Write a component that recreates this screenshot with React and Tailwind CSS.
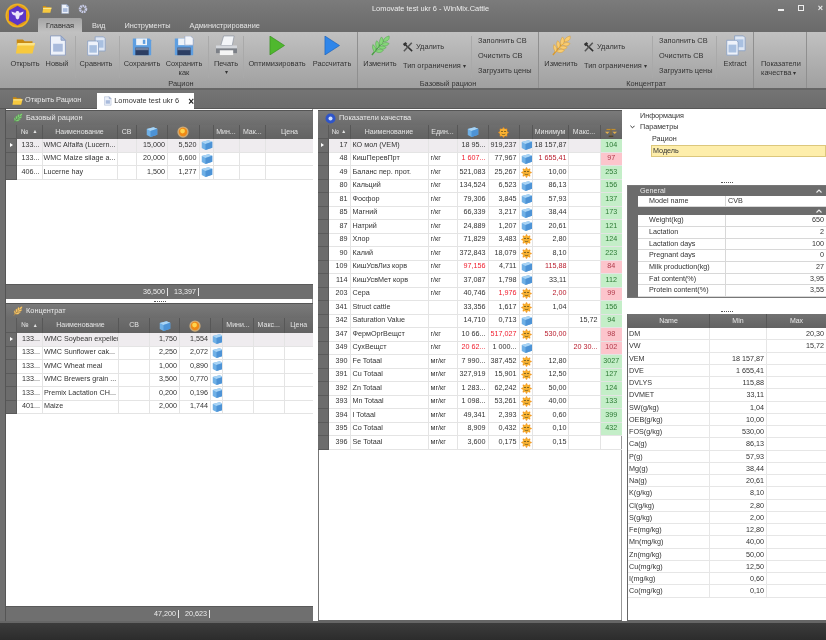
import React from 'react';

const Cube = ({ s = 12 }) => (
  <svg width={s} height={s} viewBox="0 0 16 16" className="shrink-0">
    <path d="M1 4 10 1.500l5 2.200v8L6 14.500l-5-2.500z" fill="#6fb0e6" />
    <path d="M1 4 10 1.500l5 2.200L6 6.500z" fill="#a9d4f5" />
    <path d="M6 6.500l9-2.800v8L6 14.500z" fill="#4d93d6" />
  </svg>
);
const Sun = ({ s = 12 }) => (
  <svg width={s} height={s} viewBox="0 0 16 16" className="shrink-0">
    <circle cx="8" cy="8" r="7.500" fill="#f7c77f" opacity=".7" />
    <circle cx="8" cy="8" r="5.600" fill="#f08a16" />
    <circle cx="7.400" cy="6.800" r="3.200" fill="#ffd34d" />
  </svg>
);
const Face = ({ s = 11 }) => (
  <svg width={s} height={s} viewBox="0 0 16 16" className="shrink-0">
    <g stroke="#ee8c1c" strokeWidth="2.200" strokeLinecap="round">
      <path d="M8 1.500v13M1.500 8h13M3.400 3.400l9.200 9.200M12.600 3.400l-9.200 9.200" />
    </g>
    <circle cx="8" cy="8" r="5.800" fill="#f9b233" />
    <path d="M4.300 6.500h3M8.800 6.500h3M5.400 10.300c1.500 1 3.700 1 5.200 0" stroke="#6f5a1e" strokeWidth="1.300" fill="none" />
  </svg>
);
const Scales = () => (
  <svg width="12" height="11" viewBox="0 0 16 14">
    <path d="M2 3h12" stroke="#c08d30" strokeWidth="1.600" />
    <path d="M8 2v9" stroke="#8a6a2a" strokeWidth="1.400" />
    <path d="M5 12h6" stroke="#4f3f20" strokeWidth="1.600" />
    <path d="M0 6h6l-3 3zM10 6h6l-3 3z" fill="#e2b04c" />
  </svg>
);
const Folder = ({ s = 21 }) => (
  <svg width={s} height={s} viewBox="0 0 24 24">
    <path d="M2 5h7l2 2h9v4H2z" fill="#c98a12" />
    <path d="M3 9h20l-3 12H1z" fill="#f7c93e" />
    <path d="M3 9h20l-1 3H2.400z" fill="#fce58a" />
  </svg>
);
const Doc = ({ s = 21 }) => (
  <svg width={s} height={s} viewBox="0 0 24 24">
    <path d="M4 1h12l5 5v17H4z" fill="#eef2fa" stroke="#8a9bc0" />
    <path d="M16 1v5h5z" fill="#a9bbdc" stroke="#8a9bc0" />
    <path d="M7 10h11v9H7z" fill="#a9bbdc" />
  </svg>
);
const Copy = ({ s = 20 }) => (
  <svg width={s} height={s} viewBox="0 0 24 24">
    <path d="M11 1h10l2 2v15H11z" fill="#dfe7f4" stroke="#8aa0c4" />
    <path d="M13 5h8v9h-8z" fill="#a9c0e0" />
    <path d="M2 6h11l2 2v15H2z" fill="#eef2fa" stroke="#8aa0c4" />
    <path d="M4 11h9v9H4z" fill="#a9c0e0" />
  </svg>
);
const Floppy = ({ plus }) => (
  <svg width="20" height="20" viewBox="0 0 24 24">
    <path d="M1 3h20l2 2v18H1z" fill="#5e9ee0" />
    <path d="M5 3h13v8H5z" fill="#eef2f8" />
    <path d="M13 4.500h3v5h-3z" fill="#5e9ee0" />
    <path d="M4 14h16v9H4z" fill="#2c3e63" />
    <path d="M4 14h16v3H4z" fill="#6f7f9d" />
    {plus && <path d="M13 0h7l3 3v8H13z" fill="#f4f6fb" stroke="#8a9bc0" strokeWidth=".7" />}
  </svg>
);
const Printer = () => (
  <svg width="23" height="21" viewBox="0 0 24 22">
    <path d="M9 1h11l-2 10H6z" fill="#f3f5f8" stroke="#8b93a0" strokeWidth=".7" />
    <path d="M1 11h22v7H1z" fill="#d4d7dc" />
    <path d="M1 14h22v5H1z" fill="#7c8087" />
    <path d="M5 16h14v5H5z" fill="#f5f5f5" />
  </svg>
);
const Play = ({ c1, c2 }) => (
  <svg width="16" height="19" viewBox="0 0 17 20">
    <path d="M1 0 16.500 10 1 20z" fill={c1} stroke={c2} strokeWidth=".7" />
  </svg>
);
const Wheat = ({ a, b, s = 21 }) => (
  <svg width={s} height={s} viewBox="0 0 22 22">
    <path d="M2 21 14 6" stroke={b} strokeWidth="1.500" />
    <g fill={a} stroke={b} strokeWidth=".5">
      <path d="M14 7c0-3 2-5 6-6 1 4-2 6-6 6z" />
      <path d="M11 11c-2-3-1-6 1-9 3 3 2 7-1 9z" />
      <path d="M12 10c2-2 5-3 8-1-2 3-5 3-8 1z" />
      <path d="M8 14c-2-2-3-5-1-8 3 2 3 6 1 8z" />
      <path d="M9 13c2-2 5-2 8 0-3 3-6 2-8 0z" />
      <path d="M5 18c-2-2-3-5-2-8 3 2 4 5 2 8z" />
      <path d="M6 17c2-2 5-3 8-1-2 3-6 3-8 1z" />
    </g>
  </svg>
);
const Tools = () => (
  <svg width="10" height="10" viewBox="0 0 12 12">
    <path d="M1 1.500 11 11" stroke="#2f2f2f" strokeWidth="1.800" />
    <path d="M10.500 1 1 11" stroke="#555" strokeWidth="1.800" />
    <path d="M0 3l3-3 2 2-3 3z" fill="#333" />
  </svg>
);
const Logo = () => (
  <svg width="25" height="25" viewBox="0 0 25 25">
    <circle cx="12.500" cy="12.500" r="12" fill="#f0b323" />
    <circle cx="12.500" cy="12.500" r="10.500" fill="#dd9a1c" />
    <path d="M12.500 2.800 21 7.500v10L12.500 22.200 4 17.500v-10z" fill="#5c36c8" />
    <path d="M12.500 8c1.700 0 2 1.500 2 2l4-1.500c0 2.500-2 4-3.800 4l-.7 3-1.500 1-1.500-1-.7-3c-1.800 0-3.800-1.500-3.800-4l4 1.500c0-.5.300-2 2-2z" fill="#ece6fb" />
  </svg>
);
const Chevron = () => (
  <svg width="6" height="4" viewBox="0 0 6 4"><path d="M.5 3.500 3 1l2.500 2.500" stroke="#eee" fill="none" strokeWidth="1.100" /></svg>
);

const Big = ({ icon, label, w, sub }) => (
  <div className={`flex flex-col items-center shrink-0 ${w}`}>
    <div className="h-[21px] flex items-center justify-center">{icon}</div>
    <div className="mt-[3px] text-center leading-[9px] text-[#333] whitespace-nowrap">{label}</div>
    {sub && <div className="text-center leading-[8px] text-[#333] text-[6px]">▾</div>}
  </div>
);
const Sep = () => <div className="w-px self-stretch mt-[1px] mb-[2px] bg-[#a9a9a9] shrink-0" />;
const Gap = ({ w }) => <div className={`shrink-0 ${w}`} />;
const Group = ({ w, label, children }) => (
  <div className={`shrink-0 flex flex-col h-full border-r border-[#8f8f8f] ${w}`}>
    <div className="flex-1 min-h-0 flex pt-[3px]">{children}</div>
    <div className="h-[8px] text-center leading-[8px] text-[#333]">{label}</div>
  </div>
);
const SmallCol = ({ w }) => (
  <div className={`flex flex-col gap-[5px] pt-[1px] ml-[6px] shrink-0 ${w} leading-[10px] text-[#333]`}>
    {['Заполнить СВ', 'Очистить СВ', 'Загрузить цены'].map(t => <div key={t} className="whitespace-nowrap">{t}</div>)}
  </div>
);
const Tight = () => (
  <div className="flex flex-col pt-[6px] text-[#333] w-[69px] pl-[1px] shrink-0 leading-[10px]">
    <div className="flex items-center gap-[3px] h-[11px]"><Tools />Удалить</div>
    <div className="mt-[9px] whitespace-nowrap">Тип ограничения <span className="text-[6px]">▾</span></div>
  </div>
);

const Ribbon = () => (
  <div className="h-[58px] shrink-0 flex bg-gradient-to-b from-[#c1c1c1] to-[#a0a0a0] border-b-2 border-[#666] text-[7.400px]">
    <Group w="w-[358px] pl-[5px]" label="Рацион">
      <Big w="w-[40px]" icon={<Folder />} label="Открыть" />
      <Big w="w-[24px]" icon={<Doc />} label="Новый" />
      <Gap w="w-[6px]" /><Sep />
      <Big w="w-[40px]" icon={<Copy />} label="Сравнить" />
      <Gap w="w-[3px]" /><Sep />
      <Big w="w-[44px]" icon={<Floppy />} label="Сохранить" />
      <Big w="w-[40px]" icon={<Floppy plus />} label={<>Сохранить<br />как</>} />
      <Gap w="w-[4px]" /><Sep />
      <Big w="w-[34px]" icon={<Printer />} label="Печать" sub />
      <Sep />
      <Big w="w-[66px]" icon={<Play c1="#4fb82e" c2="#358f1d" />} label="Оптимизировать" />
      <Big w="w-[44px]" icon={<Play c1="#2f86ea" c2="#1d62b8" />} label="Рассчитать" />
    </Group>
    <Group w="w-[181px]" label="Базовый рацион">
      <Big w="w-[44px]" icon={<Wheat a="#86d67a" b="#4aa044" />} label="Изменить" />
      <Tight />
      <Sep />
      <SmallCol w="w-[60px]" />
    </Group>
    <Group w="w-[215px]" label="Концентрат">
      <Big w="w-[44px]" icon={<Wheat a="#f9cd72" b="#d99a2c" />} label="Изменить" />
      <Tight />
      <Sep />
      <SmallCol w="w-[57px]" />
      <Sep />
      <Big w="w-[36px]" icon={<Copy s={21} />} label="Extract" />
    </Group>
    <div className="w-[53px] shrink-0 border-r border-[#8f8f8f] pl-[7px] pt-[27px] leading-[9px] text-[#333]">Показатели<br />качества <span className="text-[6px]">▾</span></div>
  </div>
);

const Top = () => (
  <div className="h-[32px] shrink-0 bg-gradient-to-b from-[#7b7b7b] to-[#6a6a6a] relative text-[7.400px]">
    <div className="absolute left-[5px] top-[3px]"><Logo /></div>
    <div className="h-[18px] flex items-center pl-[42px] gap-[8px] relative">
      <Folder s={10} /><Doc s={10} />
      <svg width="10" height="10" viewBox="0 0 10 10"><circle cx="5" cy="5" r="3" fill="none" stroke="#c7cbe6" strokeWidth="2.500" strokeDasharray="1.600 .6" /></svg>
      <span className="absolute left-[372px] top-[3px] text-[#eee] whitespace-nowrap">Lomovate test ukr 6 - WinMix.Cattle</span>
      <div className="absolute right-[3px] top-[4px] flex items-center gap-[14px] text-[#eee]">
        <div className="w-[6px] h-[2px] bg-[#eee] mt-[3px]" />
        <div className="w-[6px] h-[6px] border border-[#eee]" />
        <span className="font-bold leading-[8px] text-[9px]">×</span>
      </div>
    </div>
    <div className="h-[14px] flex pl-[38px] items-stretch text-[#e4e4e4]">
      <div className="w-[44px] rounded-t-[2px] bg-gradient-to-b from-[#a4a4a4] to-[#c1c1c1] text-center text-[#2f2f2f] leading-[16px]">Главная</div>
      <div className="ml-[10px] leading-[16px]">Вид</div>
      <div className="ml-[19px] leading-[16px]">Инструменты</div>
      <div className="ml-[19px] leading-[16px] whitespace-nowrap">Администрирование</div>
    </div>
  </div>
);

const DocTabs = () => (
  <div className="h-[19px] shrink-0 flex items-end bg-gradient-to-b from-[#747474] to-[#6c6c6c] border-b border-[#575757] pl-[12px] text-[7.400px]">
    <div className="w-[85px] h-[16px] flex items-center gap-[2px] text-[#e8e8e8] whitespace-nowrap"><Folder s={11} />Открыть Рацион</div>
    <div className="w-[97px] h-[16px] bg-white flex items-center pl-[6px] gap-[2px] text-[#333] relative top-px whitespace-nowrap">
      <Doc s={10} />Lomovate test ukr 6
      <span className="ml-[7px] font-bold text-[#222] text-[10px] leading-[9px]">×</span>
    </div>
  </div>
);

const Cell = ({ w, children, cls = 'px-[2px]' }) => (
  <div className={`shrink-0 h-full overflow-hidden whitespace-nowrap border-r border-b border-[#e4e4e4] flex items-center ${w} ${cls}`}>{children}</div>
);
const HeadCell = ({ w, children, cls = '' }) => (
  <div className={`shrink-0 h-full overflow-hidden whitespace-nowrap border-r border-[#575757] flex items-center justify-center ${w} ${cls}`}>{children}</div>
);
const PanelHeader = ({ icon, title }) => (
  <div className="h-[15px] shrink-0 flex items-center gap-[3px] pl-[7px] bg-gradient-to-b from-[#7a7a7a] to-[#6c6c6c] text-[#e8e8e8] text-[7.400px] border-t border-[#555]">{icon}{title}</div>
);
const ColsHead = ({ h = 'h-[14px]', children }) => (
  <div className={`${h} shrink-0 flex items-center bg-gradient-to-b from-[#6e6e6e] to-[#626262] text-[#e4e4e4] text-[7px]`}>{children}</div>
);
const Indicator = ({ on, w = 'w-[11px]' }) => (
  <div className={`${w} shrink-0 h-full bg-[#6c6c6c] border-r border-b border-[#5a5a5a] flex items-center justify-center`}>
    {on && <div className="w-0 h-0 border-y-[2.500px] border-y-transparent border-l-[3px] border-l-white" />}
  </div>
);
const Footer = ({ a, b, ml }) => (
  <div className="h-[15px] shrink-0 flex items-center bg-[#6f6f6f] border-t border-[#5a5a5a] text-[#eee] text-[7.200px]">
    <div className={`flex items-center ${ml}`}>
      <span>{a}</span><span className="w-px h-[8px] bg-[#e6e6e6] ml-[2px] mr-[6px]" />
      <span>{b}</span><span className="w-px h-[8px] bg-[#e6e6e6] ml-[2px]" />
    </div>
  </div>
);

const basic = [
  ['133...', 'WMC Alfalfa (Lucern...', '15,000', '5,520'],
  ['133...', 'WMC Maize silage a...', '20,000', '6,600'],
  ['406...', 'Lucerne hay', '1,500', '1,277'],
];
const conc = [
  ['133...', 'WMC Soybean expeller', '1,750', '1,554'],
  ['133...', 'WMC Sunflower cak...', '2,250', '2,072'],
  ['133...', 'WMC Wheat meal', '1,000', '0,890'],
  ['133...', 'WMC Brewers grain ...', '3,500', '0,770'],
  ['133...', 'Premix Lactation CH...', '0,200', '0,196'],
  ['401...', 'Maize', '2,000', '1,744'],
];

const FeedTable = ({ rows, title, icon, cols, heads, foot, ml, grow, headH }) => (
  <div className={`flex flex-col min-h-0 text-[7.200px] ${grow}`}>
    <PanelHeader icon={icon} title={title} />
    <ColsHead h={headH}>
      <Indicator />
      <HeadCell w={cols[0]}>№ <span className="ml-[4px] text-[5px]">▲</span></HeadCell>
      <HeadCell w={cols[1]}>Наименование</HeadCell>
      <HeadCell w={cols[2]}>СВ</HeadCell>
      <HeadCell w={cols[3]}><Cube /></HeadCell>
      <HeadCell w={cols[4]}><Sun /></HeadCell>
      <HeadCell w={cols[5]} />
      <HeadCell w={cols[6]}>{heads[0]}</HeadCell>
      <HeadCell w={cols[7]}>{heads[1]}</HeadCell>
      <HeadCell w={cols[8]} cls="border-r-0">Цена</HeadCell>
    </ColsHead>
    <div className="flex-1 min-h-0 bg-white">
      {rows.map((r, i) => (
        <div key={i} className={`h-[13.500px] flex items-center text-[#333] ${i === 0 ? 'bg-[#efecef]' : ''}`}>
          <Indicator on={i === 0} />
          <Cell w={cols[0]} cls="px-[2px] justify-end">{r[0]}</Cell>
          <Cell w={cols[1]} cls="pl-px">{r[1]}</Cell>
          <Cell w={cols[2]} />
          <Cell w={cols[3]} cls="px-[2px] justify-end">{r[2]}</Cell>
          <Cell w={cols[4]} cls="px-[2px] justify-end">{r[3]}</Cell>
          <Cell w={cols[5]} cls="px-px"><Cube /></Cell>
          <Cell w={cols[6]} />
          <Cell w={cols[7]} />
          <Cell w={cols[8]} cls="border-r-0" />
        </div>
      ))}
    </div>
    <Footer a={foot[0]} b={foot[1]} ml={ml} />
  </div>
);

const Q = (id, name, unit, a, b, ic, min, max, pct, flags = '') => ({ id, name, unit, a, b, ic, min, max, pct, flags });
const quality = [
  Q(17, 'КО мол (VEM)', '', '18 95...', '919,237', 'c', '18 157,87', '', '104'),
  Q(48, 'КишПеревПрт', 'г/кг', '1 607...', '77,967', 'c', '1 655,41', '', '97', 'a'),
  Q(49, 'Баланс пер. прот.', 'г/кг', '521,083', '25,267', 'f', '10,00', '', '253'),
  Q(80, 'Кальций', 'г/кг', '134,524', '6,523', 'c', '86,13', '', '156'),
  Q(81, 'Фосфор', 'г/кг', '79,306', '3,845', 'c', '57,93', '', '137'),
  Q(85, 'Магний', 'г/кг', '66,339', '3,217', 'c', '38,44', '', '173'),
  Q(87, 'Натрий', 'г/кг', '24,889', '1,207', 'c', '20,61', '', '121'),
  Q(89, 'Хлор', 'г/кг', '71,829', '3,483', 'f', '2,80', '', '124'),
  Q(90, 'Калий', 'г/кг', '372,843', '18,079', 'f', '8,10', '', '223'),
  Q(109, 'КишУсвЛиз корв', 'г/кг', '97,156', '4,711', 'c', '115,88', '', '84', 'a'),
  Q(114, 'КишУсвМет корв', 'г/кг', '37,087', '1,798', 'c', '33,11', '', '112'),
  Q(203, 'Сера', 'г/кг', '40,746', '1,976', 'f', '2,00', '', '99', 'b'),
  Q(341, 'Struct cattle', '', '33,356', '1,617', 'f', '1,04', '', '156'),
  Q(342, 'Saturation Value', '', '14,710', '0,713', 'c', '', '15,72', '94'),
  Q(347, 'ФермОргВещст', 'г/кг', '10 66...', '517,027', 'f', '530,00', '', '98', 'b'),
  Q(349, 'СухВещст', 'г/кг', '20 62...', '1 000...', 'c', '', '20 30...', '102', 'a'),
  Q(390, 'Fe Totaal', 'мг/кг', '7 990...', '387,452', 'f', '12,80', '', '3027'),
  Q(391, 'Cu Totaal', 'мг/кг', '327,919', '15,901', 'f', '12,50', '', '127'),
  Q(392, 'Zn Totaal', 'мг/кг', '1 283...', '62,242', 'f', '50,00', '', '124'),
  Q(393, 'Mn Totaal', 'мг/кг', '1 098...', '53,261', 'f', '40,00', '', '133'),
  Q(394, 'I Totaal', 'мг/кг', '49,341', '2,393', 'f', '0,60', '', '399'),
  Q(395, 'Co Totaal', 'мг/кг', '8,909', '0,432', 'f', '0,10', '', '432'),
  Q(396, 'Se Totaal', 'мг/кг', '3,600', '0,175', 'f', '0,15', '', ''),
];

const Quality = () => (
  <div className="w-[304px] shrink-0 flex flex-col text-[7.200px] ml-[5px] pt-px">
    <PanelHeader title="Показатели качества" icon={<svg width="11" height="11" viewBox="0 0 12 12"><circle cx="6" cy="6" r="5.500" fill="#2f55c9" /><circle cx="6" cy="6" r="2.200" fill="#cfe0ff" /></svg>} />
    <ColsHead>
      <Indicator w="w-[10.500px]" />
      <HeadCell w="w-[22px]">№ <span className="ml-[2px] text-[5px]">▲</span></HeadCell>
      <HeadCell w="w-[78px]">Наименование</HeadCell>
      <HeadCell w="w-[29px]">Един...</HeadCell>
      <HeadCell w="w-[31px]"><Cube /></HeadCell>
      <HeadCell w="w-[31px]"><Face /></HeadCell>
      <HeadCell w="w-[13px]" />
      <HeadCell w="w-[36px]">Минимум</HeadCell>
      <HeadCell w="w-[32px]">Макс...</HeadCell>
      <HeadCell w="w-[21.500px]" cls="border-r-0"><Scales /></HeadCell>
    </ColsHead>
    <div className="flex-1 bg-white border-b border-[#666] shadow-[inset_1px_0_0_#777,inset_-1px_0_0_#999]">
      {quality.map((r, i) => {
        const redA = r.flags === 'a';
        const redB = r.flags === 'b';
        return (
          <div key={r.id} className={`h-[13.500px] flex items-center text-[#333] ${i === 0 ? 'bg-[#efecef]' : ''}`}>
            <Indicator on={i === 0} w="w-[10.500px]" />
            <Cell w="w-[22px]" cls="px-[2px] justify-end">{r.id}</Cell>
            <Cell w="w-[78px]">{r.name}</Cell>
            <Cell w="w-[29px]">{r.unit}</Cell>
            <Cell w="w-[31px]" cls={`px-[2px] justify-end ${redA ? 'text-[#f01c2c]' : ''}`}>{r.a}</Cell>
            <Cell w="w-[31px]" cls={`px-[2px] justify-end ${redB ? 'text-[#f01c2c]' : ''}`}>{r.b}</Cell>
            <Cell w="w-[13px]" cls="px-px">{r.ic === 'c' ? <Cube /> : <Face />}</Cell>
            <Cell w="w-[36px]" cls={`px-px justify-end ${(redA || redB) ? 'text-[#b81c2c]' : ''}`}>{r.min}</Cell>
            <Cell w="w-[32px]" cls={`px-[2px] justify-end ${r.id === 349 ? 'text-[#b81c2c]' : ''}`}>{r.max}</Cell>
            <Cell w="w-[21.500px]" cls={`justify-center border-r-0 ${r.pct === '' ? '' : (redA || redB) ? 'bg-[#fcc5cc] text-[#b03a4a]' : 'bg-[#c4eec8] text-[#2c7a34]'}`}>{r.pct}</Cell>
          </div>
        );
      })}
    </div>
  </div>
);

const SepDots = ({ h }) => (
  <div className={`flex justify-center shrink-0 ${h}`}>
    <div className="w-[12px] h-px border-t border-dotted border-[#555]" />
  </div>
);

const PropRow = ({ k, v, right, h = 'h-[11.700px]' }) => (
  <div className={`${h} flex`}>
    <div className="w-[10px] shrink-0" />
    <div className="w-[88px] shrink-0 pl-[11px] bg-white border-r border-b border-[#d8d8d8] text-[#333] leading-[10.700px] whitespace-nowrap">{k}</div>
    <div className={`flex-1 px-[2px] bg-white border-b border-[#d8d8d8] text-[#333] leading-[10.700px] ${right ? 'text-right' : ''}`}>{v}</div>
  </div>
);
const params = [['Weight(kg)', '650'], ['Lactation', '2'], ['Lactation days', '100'], ['Pregnant days', '0'], ['Milk production(kg)', '27'], ['Fat content(%)', '3,95'], ['Protein content(%)', '3,55']];
const limits = [
  ['DM', '', '20,30'], ['VW', '', '15,72'], ['VEM', '18 157,87', ''], ['DVE', '1 655,41', ''], ['DVLYS', '115,88', ''], ['DVMET', '33,11', ''],
  ['SW(g/kg)', '1,04', ''], ['OEB(g/kg)', '10,00', ''], ['FOS(g/kg)', '530,00', ''], ['Ca(g)', '86,13', ''], ['P(g)', '57,93', ''], ['Mg(g)', '38,44', ''],
  ['Na(g)', '20,61', ''], ['K(g/kg)', '8,10', ''], ['Cl(g/kg)', '2,80', ''], ['S(g/kg)', '2,00', ''], ['Fe(mg/kg)', '12,80', ''], ['Mn(mg/kg)', '40,00', ''],
  ['Zn(mg/kg)', '50,00', ''], ['Cu(mg/kg)', '12,50', ''], ['I(mg/kg)', '0,60', ''], ['Co(mg/kg)', '0,10', ''],
];

const RightPane = () => (
  <div className="w-[199px] shrink-0 ml-[5px] flex flex-col text-[7.200px] text-[#333]">
    <div className="h-[73px] shrink-0">
      <div className="h-[12px] pl-[13px] leading-[13px]">Информация</div>
      <div className="h-[12px] pl-[3px] flex items-center gap-[5px]">
        <svg width="5" height="4" viewBox="0 0 6 4"><path d="M.5.500 3 3 5.500.500" stroke="#333" fill="none" strokeWidth="1.200" /></svg>
        Параметры
      </div>
      <div className="h-[12px] pl-[25px] leading-[12px]">Рацион</div>
      <div className="h-[11.500px] ml-[24px] pl-px bg-[#feeeab] border border-[#dcc77c] leading-[9.500px]">Модель</div>
    </div>
    <SepDots h="h-[3px]" />
    <div className="h-[113px] shrink-0 flex flex-col bg-[#6c6c6c] border border-[#777] border-r-0">
      <div className="h-[10.500px] pl-[12px] pr-[4px] flex items-center justify-between text-[#e8e8e8] leading-[10px]">General<Chevron /></div>
      <PropRow k="Model name" v="CVB" h="h-[11px]" />
      <div className="h-[10px] pr-[4px] flex items-center justify-end"><Chevron /></div>
      {params.map(([k, v]) => <PropRow key={k} k={k} v={v} right />)}
    </div>
    <SepDots h="h-[16px] items-end pb-[2px]" />
    <div className="flex-1 min-h-0 flex flex-col bg-white border-l border-b border-[#666]">
      <div className="h-[14px] shrink-0 flex items-center bg-gradient-to-b from-[#727272] to-[#626262] text-[#e8e8e8] text-[7px]">
        <HeadCell w="w-[82px]">Name</HeadCell>
        <HeadCell w="w-[57px]">Min</HeadCell>
        <HeadCell w="flex-1 shrink" cls="border-r-0">Max</HeadCell>
      </div>
      {limits.map(([n, a, b]) => (
        <div key={n} className="h-[12.250px] shrink-0 flex border-b border-[#e6e6e6] leading-[11px]">
          <div className="w-[82px] pl-px border-r border-[#e6e6e6]">{n}</div>
          <div className="w-[57px] pr-[2px] text-right border-r border-[#e6e6e6]">{a}</div>
          <div className="flex-1 pr-[2px] text-right">{b}</div>
        </div>
      ))}
    </div>
  </div>
);

export default function App() {
  return (
    <div className="w-[826px] h-[640px] overflow-hidden flex flex-col bg-white blur-[0.25px]" style={{ fontFamily: '"Liberation Sans", "Noto Sans", sans-serif' }}>
      <Top />
      <Ribbon />
      <DocTabs />
      <div className="h-[512px] shrink-0 flex bg-white">
        <div className="w-[6px] shrink-0 bg-[#6f6f6f] border-r border-[#555]" />
        <div className="w-[307px] shrink-0 flex flex-col shadow-[inset_-1px_0_0_#999]">
          <FeedTable
            rows={basic}
            grow="h-[190px] shrink-0 pt-px"
            title="Базовый рацион"
            icon={<Wheat a="#86d67a" b="#4aa044" s={10} />}
            cols={['w-[25.500px]', 'w-[75px]', 'w-[19px]', 'w-[31.500px]', 'w-[31.500px]', 'w-[14px]', 'w-[26px]', 'w-[26.500px]', 'w-[47px]']}
            heads={['Мин...', 'Мак...']}
            foot={['36,500', '13,397']}
            ml="ml-[137px]"
          />
          <SepDots h="h-[4px] items-center" />
          <FeedTable
            rows={conc}
            grow="flex-1"
            headH="h-[15px]"
            title="Концентрат"
            icon={<Wheat a="#f9cd72" b="#d99a2c" s={10} />}
            cols={['w-[26px]', 'w-[76px]', 'w-[31px]', 'w-[30px]', 'w-[31px]', 'w-[12px]', 'w-[31px]', 'w-[30.500px]', 'w-[28.500px]']}
            heads={['Мини...', 'Макс...']}
            foot={['47,200', '20,623']}
            ml="ml-[148px]"
          />
        </div>
        <Quality />
        <RightPane />
      </div>
      <div className="flex-1 bg-gradient-to-b from-[#3c3c3c] to-[#2c2c2c] border-t-2 border-[#666]" />
    </div>
  );
}
